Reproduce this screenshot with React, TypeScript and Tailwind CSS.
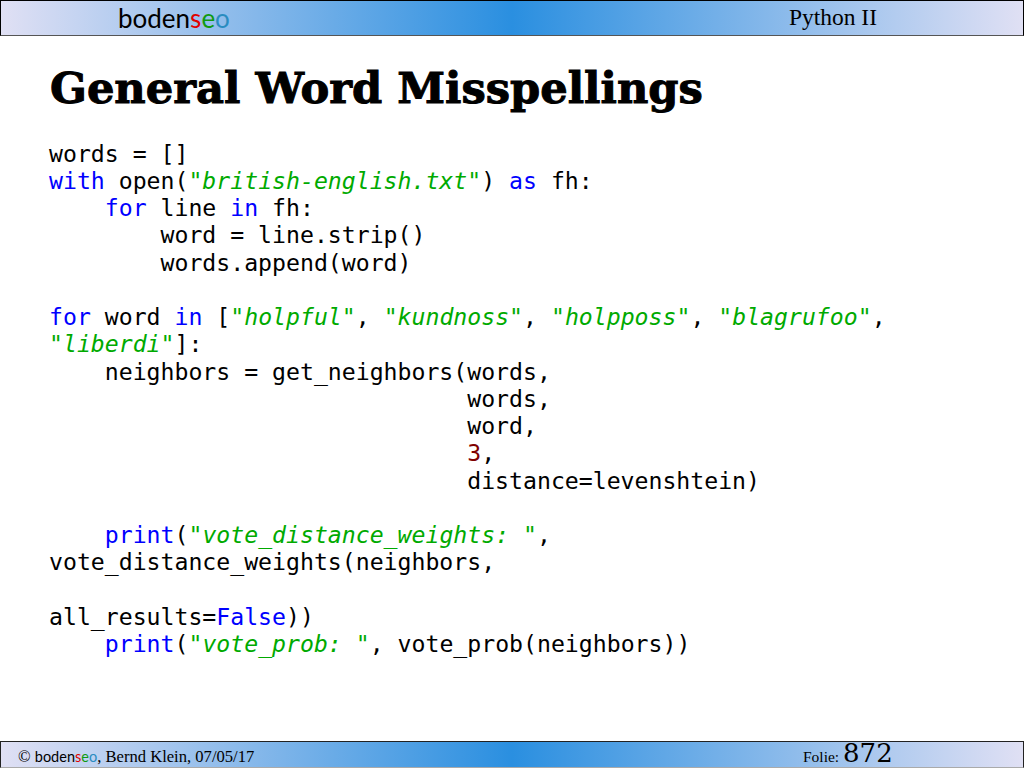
const mono = "font-['DejaVu_Sans_Mono',monospace]";

const K = ({ children }: { children: string }) => <span className="text-[#0000ff]">{children}</span>;
const S = ({ children }: { children: string }) => <span className="italic text-[#00aa00]">{children}</span>;

function Logo({ small }: { small?: boolean }) {
  return (
    <span className={small ? "font-['Lato',sans-serif] text-[14.5px] text-black" : "font-['Lato',sans-serif] text-[26px] leading-none text-black"}>
      boden<span className="text-[#e00000]">s</span><span className="text-[#109a10]">e</span><span className="text-[#2a8cc0]">o</span>
    </span>
  );
}

const barBg = "bg-[linear-gradient(to_right,#e0e0f4_0%,#2a8fe0_50%,#e0e0f4_100%)]";

export default function App() {
  return (
    <div className="w-[1024px] h-[768px] bg-white flex flex-col overflow-hidden font-['Liberation_Serif',serif] text-black">
      <header className={`h-9 shrink-0 border border-black border-b-[#555555] flex items-center justify-between pl-[117px] pr-[146px] ${barBg}`}>
        <Logo />
        <span className="text-[23.5px]">Python II</span>
      </header>
      <main className="flex-1 pl-[49px]">
        <h1 className="mt-[24px] ml-px h-[55px] text-[43.2px] leading-[55px] font-bold font-['DejaVu_Serif',serif] [-webkit-text-stroke:1px_black]">General Word Misspellings</h1>
        <pre className={`mt-[25.7px] text-[23.16px] leading-[27.25px] ${mono}`}>
{`words = []
`}<K>with</K>{` open(`}<S>"british-english.txt"</S>{`) `}<K>as</K>{` fh:
    `}<K>for</K>{` line `}<K>in</K>{` fh:
        word = line.strip()
        words.append(word)

`}<K>for</K>{` word `}<K>in</K>{` [`}<S>"holpful"</S>{`, `}<S>"kundnoss"</S>{`, `}<S>"holpposs"</S>{`, `}<S>"blagrufoo"</S>{`,
`}<S>"liberdi"</S>{`]:
    neighbors = get_neighbors(words,
                              words,
                              word,
                              `}<span className="text-[#800000]">3</span>{`,
                              distance=levenshtein)

    `}<K>print</K>{`(`}<S>"vote_distance_weights: "</S>{`,
vote_distance_weights(neighbors,

all_results=`}<K>False</K>{`))
    `}<K>print</K>{`(`}<S>"vote_prob: "</S>{`, vote_prob(neighbors))`}
        </pre>
      </main>
      <footer className={`h-[27px] shrink-0 border border-[#222222] border-b-[#aaaaaa] flex items-baseline pt-[2px] pl-[17px] text-[16.6px] leading-[18px] ${barBg}`}>
        <span className="w-[785px]">© <Logo small />, Bernd Klein, 07/05/17</span>
        <span className="text-[15.5px] leading-[18px]">Folie: <span className="font-['DejaVu_Serif',serif] text-[26px] leading-[18px]">872</span></span>
      </footer>
    </div>
  );
}
